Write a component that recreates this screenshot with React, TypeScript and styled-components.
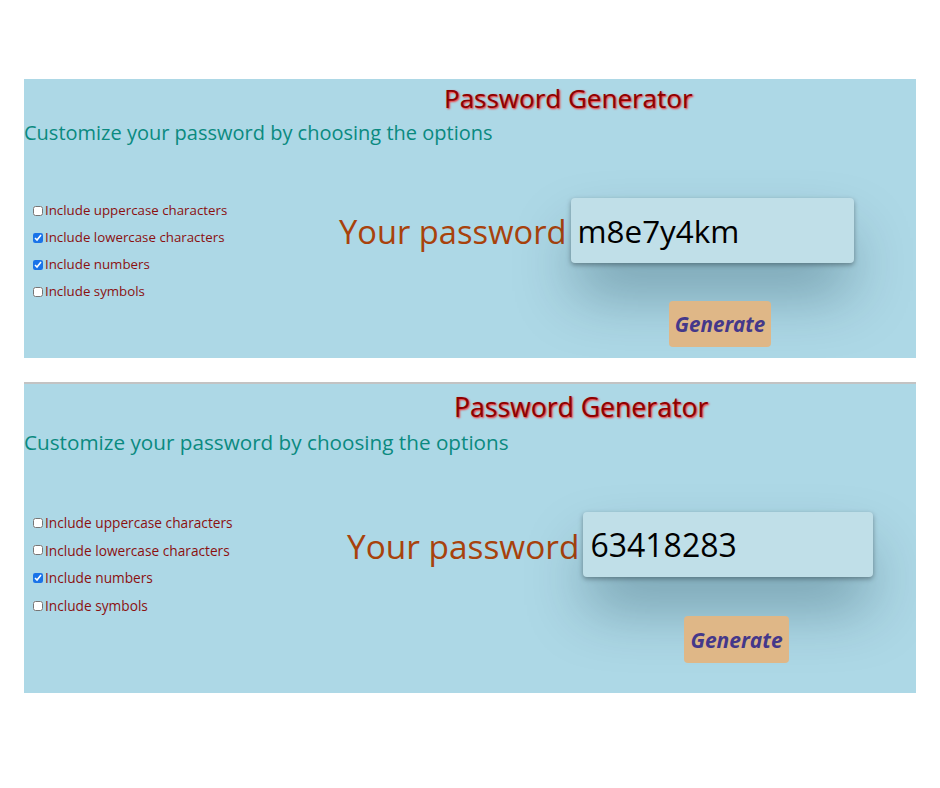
import React from 'react';
import styled, { createGlobalStyle } from 'styled-components';

const GlobalStyle = createGlobalStyle`
  body {
    margin: 0;
    background: #ffffff;
    font-family: 'Open Sans', 'Noto Sans', sans-serif;
  }
`;

const Page = styled.div`
  width: 892px;
  padding: 79px 24px 0;
`;

const Gap = styled.div`
  height: 24px;
  border-bottom: 2px solid #c3c3c3;
`;

const Panel = styled.section<{ $s: number }>`
  background: #add8e6;
  height: ${(p) => p.$s}px;
  overflow: hidden;
`;

const Title = styled.h1<{ $indent: number; $size: number; $top: number }>`
  margin: 0;
  padding: ${(p) => p.$top}px 0 0 ${(p) => p.$indent}px;
  font-size: ${(p) => p.$size}px;
  font-weight: 400;
  line-height: 34px;
  color: #8e0000;
  text-shadow: 1px 1px 2px #ff1a1a;
`;

const Subtitle = styled.p<{ $size: number }>`
  margin: 4px 0 0;
  font-size: ${(p) => p.$size}px;
  line-height: 28px;
  color: #0a8a80;
`;

const Body = styled.div<{ $top: number }>`
  display: flex;
  margin-top: ${(p) => p.$top}px;
`;

const Options = styled.div<{ $width: number; $row: number; $top: number }>`
  width: ${(p) => p.$width}px;
  padding: ${(p) => p.$top}px 0 0 5px;
  display: flex;
  flex-direction: column;
  gap: ${(p) => p.$row - 19}px;
`;

const Option = styled.label<{ $size: number }>`
  display: flex;
  align-items: center;
  font-size: ${(p) => p.$size}px;
  line-height: 19px;
  color: #8b1010;
`;

const Check = styled.input`
  width: 10px;
  height: 10px;
  margin: 0 2px 0 4px;
  accent-color: #1a73e8;
`;

const Result = styled.div<{ $top: number }>`
  display: flex;
  flex-direction: column;
  padding-top: ${(p) => p.$top}px;
`;

const Row = styled.div`
  display: flex;
  align-items: center;
  gap: 4px;
`;

const Label = styled.span<{ $size: number }>`
  font-size: ${(p) => p.$size}px;
  color: #a8420c;
  padding-top: 2px;
`;

const Output = styled.div<{ $w: number; $size: number }>`
  width: ${(p) => p.$w}px;
  height: 65px;
  box-sizing: border-box;
  padding-left: 7px;
  display: flex;
  align-items: center;
  font-size: ${(p) => p.$size}px;
  color: #000;
  background: #c0dfe8;
  border-radius: 4px;
  box-shadow: 0 34px 60px -4px rgba(0, 40, 60, 0.34), 0 2px 5px rgba(0, 0, 0, 0.35);
`;

const Generate = styled.button<{ $ml: number; $mt: number; $w: number; $h: number; $size: number }>`
  align-self: flex-start;
  margin: ${(p) => p.$mt}px 0 0 ${(p) => p.$ml}px;
  width: ${(p) => p.$w}px;
  height: ${(p) => p.$h}px;
  padding: 0;
  border: none;
  border-radius: 4px;
  background: #dfb787;
  color: #44388a;
  font-family: 'Open Sans', sans-serif;
  font-size: ${(p) => p.$size}px;
  font-weight: 700;
  font-style: italic;
  cursor: pointer;
`;

type Variant = {
  height: number;
  titleTop: number;
  titleIndent: number;
  title: number;
  sub: number;
  bodyTop: number;
  optTop: number;
  optWidth: number;
  optSize: number;
  row: number;
  resultTop: number;
  label: number;
  outW: number;
  outSize: number;
  btnMl: number;
  btnMt: number;
  btnW: number;
  btnH: number;
  btnSize: number;
};

const OPTIONS = [
  'Include uppercase characters',
  'Include lowercase characters',
  'Include numbers',
  'Include symbols',
];

const small: Variant = {
  height: 279,
  titleTop: 2,
  titleIndent: 420,
  title: 26,
  sub: 20,
  bodyTop: 38,
  optTop: 16,
  optWidth: 310,
  optSize: 13.3,
  row: 27,
  resultTop: 13,
  label: 32.7,
  outW: 283,
  outSize: 31.4,
  btnMl: 330,
  btnMt: 38,
  btnW: 102,
  btnH: 46,
  btnSize: 20.6,
};

const large: Variant = {
  height: 309,
  titleTop: 6,
  titleIndent: 430,
  title: 26.6,
  sub: 20.7,
  bodyTop: 41,
  optTop: 16,
  optWidth: 318,
  optSize: 13.7,
  row: 27.7,
  resultTop: 15,
  label: 33.4,
  outW: 290,
  outSize: 32,
  btnMl: 337,
  btnMt: 39,
  btnW: 105,
  btnH: 47,
  btnSize: 21,
};

const Generator: React.FC<{ v: Variant; checked: boolean[]; password: string }> = ({
  v,
  checked,
  password,
}) => (
  <Panel $s={v.height}>
    <Title $indent={v.titleIndent} $size={v.title} $top={v.titleTop}>
      Password Generator
    </Title>
    <Subtitle $size={v.sub}>Customize your password by choosing the options</Subtitle>
    <Body $top={v.bodyTop}>
      <Options $width={v.optWidth} $row={v.row} $top={v.optTop}>
        {OPTIONS.map((text, i) => (
          <Option key={text} $size={v.optSize}>
            <Check type="checkbox" defaultChecked={checked[i]} />
            {text}
          </Option>
        ))}
      </Options>
      <Result $top={v.resultTop}>
        <Row>
          <Label $size={v.label}>Your password</Label>
          <Output $w={v.outW} $size={v.outSize}>
            {password}
          </Output>
        </Row>
        <Generate $ml={v.btnMl} $mt={v.btnMt} $w={v.btnW} $h={v.btnH} $size={v.btnSize}>
          Generate
        </Generate>
      </Result>
    </Body>
  </Panel>
);

export default function App() {
  return (
    <Page>
      <GlobalStyle />
      <Generator v={small} checked={[false, true, true, false]} password="m8e7y4km" />
      <Gap />
      <Generator v={large} checked={[false, false, true, false]} password="63418283" />
    </Page>
  );
}
